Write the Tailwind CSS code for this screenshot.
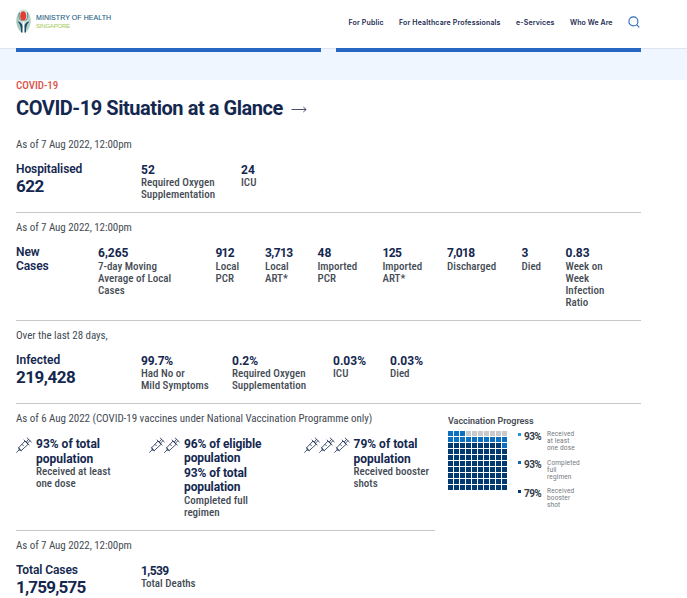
<!DOCTYPE html>
<html lang="en">
<head>
  <meta charset="UTF-8">
  <meta name="viewport" content="width=device-width, initial-scale=1.0">
  <title>Ministry of Health Singapore</title>
  <script src="https://cdn.jsdelivr.net/npm/@tailwindcss/browser@4"></script>
</head>
<body class="bg-white font-[Roboto,sans-serif] text-[#454c55] h-[598px] overflow-hidden">
  <svg class="hidden">
    <symbol id="syringe" viewBox="0 0 16 16">
      <g fill="none" stroke="#1b2b52" stroke-width="0.8" stroke-linecap="round" stroke-linejoin="round">
        <path d="M0.6 15.4 L3.2 12.7 M2.2 10.6 L5.5 13.8 M3.2 12.8 L3 10.4 L9 4 L12.2 7.2 L5.8 13.1 Z M8 3 L13.2 8.1 M10.3 4.9 L12.4 2.5 M11.5 6.1 L13.8 3.8 M11.2 1 L15.3 5"/>
        <path d="M6.2 7.5 L7.4 8.7"/>
      </g>
    </symbol>
  </svg>

  <!-- Header -->
  <header class="h-12 pl-4 pr-[47px] flex items-start justify-between">
    <div class="flex pt-[9px]">
      <svg class="w-[15px] h-6" viewBox="0 0 15 24">
        <ellipse cx="7.5" cy="12" rx="7.2" ry="11.8" fill="#d3e6df"/>
        <path d="M3 3 Q0.3 7 0.4 13 Q1.2 20 5.5 23 L6.5 17 Q2.2 14 3 3Z" fill="#a9cbb9"/>
        <path d="M12 3 Q14.7 7 14.6 13 Q13.8 20 9.5 23 L8.5 17 Q12.8 14 12 3Z" fill="#b5d3c4"/>
        <path d="M3.6 3.5 Q1.8 9 5.8 12.2 M11.4 3.5 Q12.8 9 9.3 12.2" fill="none" stroke="#4d7488" stroke-width="0.9"/>
        <ellipse cx="7.2" cy="7" rx="3" ry="4.7" fill="#e03f35"/>
        <path d="M1.6 12.4 Q5.2 12.8 6.4 16 V23.4 H5 Q5.6 16.4 1.6 12.4Z M13.4 12.4 Q9.8 12.8 8.6 16 V23.4 H10 Q9.4 16.4 13.4 12.4Z" fill="#1f4a6d"/>
        <path d="M7.5 12.5 V23.5" stroke="#fff" stroke-width="1"/>
      </svg>
      <div class="pl-[5px] pt-[5px] font-['Liberation_Sans',sans-serif] whitespace-nowrap">
        <p class="text-[7px] leading-[8px] tracking-[0.07px] text-[#235d82] [-webkit-text-stroke:0.1px_#235d82]">MINISTRY OF HEALTH</p>
        <p class="text-[6px] leading-[8px] tracking-[-0.2px] text-[#a2c94f]">SINGAPORE</p>
      </div>
    </div>
    <nav class="flex pt-[17px] text-[7px] leading-[11px] font-semibold tracking-[0.15px] text-[#1b2b52] font-[Inter,sans-serif] whitespace-nowrap">
      <a class="w-[50.5px]">For Public</a>
      <a class="w-[117px]">For Healthcare Professionals</a>
      <a class="w-[54px]">e-Services</a>
      <a class="w-[58px] tracking-[0.05px]">Who We Are</a>
      <svg class="w-3 h-3 -mt-px" viewBox="0 0 12 12" fill="none" stroke="#2c6ac0" stroke-width="1.1"><circle cx="5.4" cy="5.4" r="4.5"/><path d="M8.6 8.6 L11.3 11.3"/></svg>
    </nav>
  </header>

  <!-- Banner -->
  <div class="h-8 bg-[#f0f6ff] border-t border-[#dde6f0] px-4">
    <div class="flex gap-[15px] -mt-px">
      <div class="w-[305px] h-1 bg-[#2866c3]"></div>
      <div class="w-[305px] h-1 bg-[#2866c3]"></div>
    </div>
  </div>

  <main class="pl-4 w-[641px] whitespace-nowrap">
    <div class="h-[49px]">
      <p class="text-[11px] leading-[12px] font-medium [font-stretch:75%] tracking-[-0.05px] text-[#d9534a]">COVID-19</p>
      <h1 class="flex items-center text-[20px] leading-[32px] font-bold text-[#14284f]">
        <span class="w-[275px] tracking-[-0.45px]">COVID-19 Situation at a Glance</span>
        <svg class="w-4 h-[7px] mt-[3px]" viewBox="0 0 16 7" fill="none" stroke="#35405a" stroke-width="0.9"><path d="M0.5 3.5 H15 M12.3 1 L15.2 3.5 L12.3 6"/></svg>
      </h1>
    </div>

    <section class="h-[84px] pt-[8px] border-b border-[#c8c8c8]">
      <p class="text-[11px] leading-4 [font-stretch:75%] tracking-[-0.06px]">As of 7 Aug 2022, 12:00pm</p>
      <div class="flex pt-[9px] text-[11px] leading-3 font-medium [font-stretch:75%]">
        <div class="w-[125px] text-[#14284f] [font-stretch:100%]">
          <h2 class="text-[12px] leading-[14px] font-semibold tracking-[-0.1px]">Hospitalised</h2>
          <p class="text-[17px] leading-5 font-bold tracking-[-0.5px]">622</p>
        </div>
        <div class="w-[100px] pt-px"><b class="block text-[12px] leading-[14px] text-[#14284f] [font-stretch:100%]">52</b>Required Oxygen<br>Supplementation</div>
        <div class="pt-px"><b class="block text-[12px] leading-[14px] text-[#14284f] [font-stretch:100%]">24</b>ICU</div>
      </div>
    </section>

    <section class="h-[108px] pt-[7px] border-b border-[#c8c8c8]">
      <p class="text-[11px] leading-4 [font-stretch:75%] tracking-[-0.06px]">As of 7 Aug 2022, 12:00pm</p>
      <div class="flex pt-[9px] text-[11px] leading-3 font-medium [font-stretch:75%]">
        <h2 class="w-[82px] text-[12px] leading-[14px] font-semibold text-[#14284f] [font-stretch:100%] tracking-[-0.1px]">New<br>Cases</h2>
        <div class="w-[117.5px] pt-px"><b class="block text-[12px] leading-[15px] text-[#14284f] [font-stretch:100%]">6,265</b>7-day Moving<br>Average of Local<br>Cases</div>
        <div class="w-[49.5px] pt-px"><b class="block text-[12px] leading-[15px] text-[#14284f] [font-stretch:100%] tracking-[-0.8px]">912</b>Local<br>PCR</div>
        <div class="w-[52.5px] pt-px"><b class="block text-[12px] leading-[15px] text-[#14284f] [font-stretch:100%] tracking-[-0.6px]">3,713</b>Local<br>ART*</div>
        <div class="w-[65px] pt-px"><b class="block text-[12px] leading-[15px] text-[#14284f] [font-stretch:100%]">48</b>Imported<br>PCR</div>
        <div class="w-[64.5px] pt-px"><b class="block text-[12px] leading-[15px] text-[#14284f] [font-stretch:100%] tracking-[-0.6px]">125</b>Imported<br>ART*</div>
        <div class="w-[74.5px] pt-px"><b class="block text-[12px] leading-[15px] text-[#14284f] [font-stretch:100%] tracking-[-0.6px]">7,018</b>Discharged</div>
        <div class="w-[44px] pt-px"><b class="block text-[12px] leading-[15px] text-[#14284f] [font-stretch:100%]">3</b>Died</div>
        <div class="pt-px"><b class="block text-[12px] leading-[15px] text-[#14284f] [font-stretch:100%]">0.83</b>Week on<br>Week<br>Infection<br>Ratio</div>
      </div>
    </section>

    <section class="h-[83px] pt-[7px] border-b border-[#c8c8c8]">
      <p class="text-[11px] leading-4 [font-stretch:75%] tracking-[-0.06px]">Over the last 28 days,</p>
      <div class="flex pt-[9px] text-[11px] leading-3 font-medium [font-stretch:75%]">
        <div class="w-[125px] text-[#14284f] [font-stretch:100%]">
          <h2 class="text-[12px] leading-[14px] font-semibold">Infected</h2>
          <p class="text-[17px] leading-5 font-bold tracking-[-0.5px]">219,428</p>
        </div>
        <div class="w-[91px] pt-px"><b class="block text-[12px] leading-[14px] text-[#14284f] [font-stretch:100%] tracking-[-0.2px]">99.7%</b>Had No or<br>Mild Symptoms</div>
        <div class="w-[101px] pt-px"><b class="block text-[12px] leading-[14px] text-[#14284f] [font-stretch:100%]">0.2%</b>Required Oxygen<br>Supplementation</div>
        <div class="w-[57px] pt-px"><b class="block text-[12px] leading-[14px] text-[#14284f] [font-stretch:100%]">0.03%</b>ICU</div>
        <div class="pt-px"><b class="block text-[12px] leading-[14px] text-[#14284f] [font-stretch:100%]">0.03%</b>Died</div>
      </div>
    </section>

    <div class="flex">
      <section class="w-[419px] h-[127px] pt-[7px] border-b border-[#c8c8c8]">
        <p class="text-[11px] leading-4 [font-stretch:75%] tracking-[-0.04px]">As of 6 Aug 2022 (COVID-19 vaccines under National Vaccination Programme only)</p>
        <div class="flex pt-[10px] text-[11px] leading-3 font-medium [font-stretch:75%]">
          <div class="w-[133px] shrink-0 flex gap-1">
            <svg class="w-4 h-4 shrink-0"><use href="#syringe"/></svg>
            <div><b class="block text-[12px] leading-[14.5px] text-[#14284f] [font-stretch:100%]">93% of total<br>population</b>Received at least<br>one dose</div>
          </div>
          <div class="w-[154.5px] shrink-0 flex">
            <svg class="w-4 h-4 shrink-0 -mr-px"><use href="#syringe"/></svg>
            <svg class="w-4 h-4 shrink-0 mr-1"><use href="#syringe"/></svg>
            <div><b class="block text-[12px] leading-[14.4px] text-[#14284f] [font-stretch:100%] tracking-[-0.1px]">96% of eligible<br>population<br>93% of total<br>population</b>Completed full<br>regimen</div>
          </div>
          <div class="flex shrink-0">
            <svg class="w-4 h-4 shrink-0 -mr-px"><use href="#syringe"/></svg>
            <svg class="w-4 h-4 shrink-0 -mr-px"><use href="#syringe"/></svg>
            <svg class="w-4 h-4 shrink-0 mr-1"><use href="#syringe"/></svg>
            <div><b class="block text-[12px] leading-[14.5px] text-[#14284f] [font-stretch:100%]">79% of total<br>population</b>Received booster<br>shots</div>
          </div>
        </div>
      </section>

      <aside class="pl-[13px] pt-3">
        <h3 class="text-[9px] leading-[10px] font-semibold tracking-[-0.03px]">Vaccination Progress</h3>
        <div class="flex pt-[4px]">
          <div id="grid" class="grid grid-cols-10 gap-px w-[59px] h-[59px] mt-px"></div>
          <ul class="pl-[11px] text-[6.5px] leading-[7px] text-[#73777e] tracking-[0.15px]">
            <li class="flex h-[29px] pt-px"><i class="size-[3px] bg-[#1e9bdc] mt-[2px]"></i><b class="w-[26px] pl-[3px] text-[10px] leading-[11px] tracking-[-0.6px] text-[#343c48]">93%</b><span>Received<br>at least<br>one dose</span></li>
            <li class="flex h-[28px] pt-px"><i class="size-[3px] bg-[#0a68b4] mt-px"></i><b class="w-[26px] pl-[3px] text-[10px] leading-[9px] tracking-[-0.6px] text-[#343c48]">93%</b><span>Completed<br>full<br>regimen</span></li>
            <li class="flex pt-px"><i class="size-[3px] bg-[#003a70] mt-[2px]"></i><b class="w-[26px] pl-[3px] text-[10px] leading-[11px] tracking-[-0.6px] text-[#343c48]">79%</b><span>Received<br>booster<br>shot</span></li>
          </ul>
        </div>
      </aside>
    </div>

    <section class="pt-[7px]">
      <p class="text-[11px] leading-4 [font-stretch:75%] tracking-[-0.06px]">As of 7 Aug 2022, 12:00pm</p>
      <div class="flex pt-[9px] text-[11px] leading-3 font-medium [font-stretch:75%]">
        <div class="w-[125px] text-[#14284f] [font-stretch:100%]">
          <h2 class="text-[12px] leading-[14px] font-semibold tracking-[-0.1px]">Total Cases</h2>
          <p class="text-[17px] leading-5 font-bold tracking-[-0.8px]">1,759,575</p>
        </div>
        <div class="pt-px"><b class="block text-[12px] leading-[14px] text-[#14284f] [font-stretch:100%] tracking-[-0.6px]">1,539</b>Total Deaths</div>
      </div>
    </section>
  </main>

  <script>
    const grid = document.getElementById('grid');
    for (let i = 0; i < 100; i++) {
      const cell = document.createElement('div');
      // blue = first doses, navy = boosters, grey = remaining
      if (i >= 3 && i < 10) cell.className = 'bg-[#c9cacc]';
      else if (i < 20 || i === 29) cell.className = 'bg-[#0c6fc0]';
      else cell.className = 'bg-[#003a70]';
      grid.appendChild(cell);
    }
  </script>
</body>
</html>
